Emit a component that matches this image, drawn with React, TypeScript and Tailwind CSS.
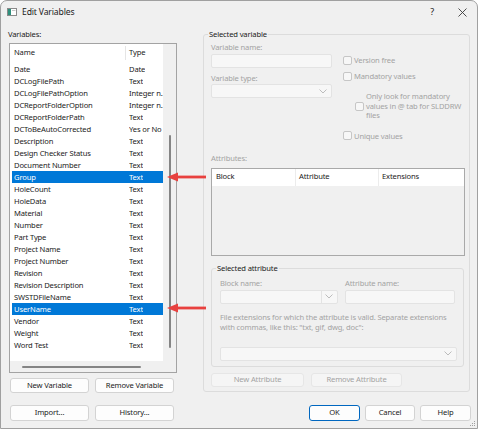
import React from 'react';

const rows: [string, string][] = [
  ['Date', 'Date'],
  ['DCLogFilePath', 'Text'],
  ['DCLogFilePathOption', 'Integer n.'],
  ['DCReportFolderOption', 'Integer n.'],
  ['DCReportFolderPath', 'Text'],
  ['DCToBeAutoCorrected', 'Yes or No'],
  ['Description', 'Text'],
  ['Design Checker Status', 'Text'],
  ['Document Number', 'Text'],
  ['Group', 'Text'],
  ['HoleCount', 'Text'],
  ['HoleData', 'Text'],
  ['Material', 'Text'],
  ['Number', 'Text'],
  ['Part Type', 'Text'],
  ['Project Name', 'Text'],
  ['Project Number', 'Text'],
  ['Revision', 'Text'],
  ['Revision Description', 'Text'],
  ['SWSTDFileName', 'Text'],
  ['UserName', 'Text'],
  ['Vendor', 'Text'],
  ['Weight', 'Text'],
  ['Word Test', 'Text'],
];

const selected = ['Group', 'UserName'];

const Chevron = () => (
  <svg width="8" height="5" viewBox="0 0 8 5" className="mr-[4px]">
    <path d="M0.5 0.5 L4 4 L7.5 0.5" fill="none" stroke="#b4b4b4" strokeWidth="0.9" />
  </svg>
);

const Checkbox = ({ label }: { label: React.ReactNode }) => (
  <div className="flex items-center h-[12px]">
    <div className="w-[9px] h-[9px] border border-[#c6c6c6] rounded-[2px] bg-[#f7f7f7] shrink-0" />
    <span className="ml-[2px] text-[#a3a3a3] leading-[12px]">{label}</span>
  </div>
);

const Button = ({ label, className, disabled }: { label: string; className: string; disabled?: boolean }) => (
  <div
    className={
      'flex items-center justify-center rounded-[3px] border ' +
      (disabled ? 'bg-[#f5f5f5] border-[#e6e6e6] text-[#a3a3a3] ' : 'bg-[#fdfdfd] border-[#d3d3d3] text-[#1b1b1b] ') +
      className
    }
  >
    {label}
  </div>
);

const Arrow = ({ top }: { top: string }) => (
  <svg width="40" height="10" viewBox="0 0 40 10" className={'absolute left-[167px] ' + top}>
    <polygon points="0,5 11,0.5 11,9.5" fill="#e8413f" />
    <rect x="10" y="3.6" width="29" height="2.8" fill="#e8413f" />
  </svg>
);

export default function App() {
  return (
    <div className="relative w-[480px] h-[430px] bg-white font-['Noto_Sans',sans-serif] text-[7.6px] tracking-[-0.15px] whitespace-nowrap text-[#1b1b1b]">
      <div className="relative w-[478px] h-[429px] border border-[#a0a0a0] rounded-t-[7px] bg-[#f0f0f0] flex flex-col overflow-hidden">
        {/* title bar */}
        <div className="h-[22px] flex items-center shrink-0">
          <svg width="10" height="8" viewBox="0 0 10 8" className="ml-[6px]">
            <rect x="0.5" y="0.5" width="9" height="7" fill="#ffffff" stroke="#8a8a8a" />
            <rect x="1" y="1" width="3" height="6" fill="#2f8f7c" />
            <rect x="5" y="2" width="3.5" height="1" fill="#c8c8c8" />
          </svg>
          <span className="ml-[5px] text-[8.6px] text-[#1b1b1b]">Edit Variables</span>
          <span className="ml-auto mr-[24px] text-[9px]">?</span>
          <svg width="9" height="9" viewBox="0 0 9 9" className="mr-[10px]">
            <path d="M0.5 0.5 L8.5 8.5 M8.5 0.5 L0.5 8.5" stroke="#3a3a3a" strokeWidth="0.9" />
          </svg>
        </div>

        {/* main */}
        <div className="flex pt-[5px] pl-[7px]">
          {/* left column */}
          <div className="w-[169px] flex flex-col">
            <div className="h-[12px] leading-[12px]">Variables:</div>
            <div className="mt-[3px] ml-[1px] w-[168px] h-[330px] border border-[#a3a3a3] flex flex-col">
              <div className="flex h-[317px]">
                <div className="w-[153px] bg-white overflow-hidden">
                  <div className="h-[18px] flex items-center">
                    <div className="w-[115px] pl-[4px]">Name</div>
                    <div className="h-[14px] w-px bg-[#e5e5e5]" />
                    <div className="pl-[3px]">Type</div>
                  </div>
                  <div className="mt-[1px]">
                    {rows.map(([n, t]) => {
                      const sel = selected.includes(n);
                      return (
                        <div
                          key={n}
                          className={
                            'ml-[2px] h-[12px] leading-[12px] flex ' +
                            (sel ? 'bg-[#0078d7] text-white' : '')
                          }
                        >
                          <div className="w-[117px] pl-[2px] shrink-0">{n}</div>
                          <div className="overflow-hidden">{t}</div>
                        </div>
                      );
                    })}
                  </div>
                </div>
                <div className="w-[13px] bg-[#f0f0f0]">
                  <div className="mt-[91px] ml-[6px] w-[2px] h-[213px] rounded-full bg-[#858585]" />
                </div>
              </div>
              <div className="h-[11px] bg-[#f0f0f0]">
                <div className="mt-[5px] ml-[12px] w-[119px] h-[2px] rounded-full bg-[#858585]" />
              </div>
            </div>
            <div className="mt-[5px] ml-[2px] flex gap-[6px]">
              <Button label="New Variable" className="w-[79px] h-[15px]" />
              <Button label="Remove Variable" className="w-[79px] h-[15px]" />
            </div>
          </div>

          {/* right column: Selected variable */}
          <div className="ml-[26px] mt-[6px] w-[267px] h-[358px] border border-[#dcdcdc] rounded-[3px] relative pl-[7px] pt-[6px]">
            <span className="absolute left-[4px] -top-[7px] px-[1px] bg-[#f0f0f0] leading-[12px] text-[#1b1b1b]">
              Selected variable
            </span>
            <div className="flex">
              <div className="w-[121px] flex flex-col text-[#a3a3a3]">
                <div className="h-[12px] leading-[12px]">Variable name:</div>
                <div className="mt-[1px] h-[14px] border border-[#e3e3e3] bg-[#f7f7f7] rounded-[2px]" />
                <div className="mt-[4px] h-[12px] leading-[12px]">Variable type:</div>
                <div className="h-[14px] border border-[#e3e3e3] bg-[#f7f7f7] rounded-[2px] flex items-center justify-end">
                  <Chevron />
                </div>
              </div>
              <div className="ml-[11px] flex flex-col">
                <div className="mt-[13px]">
                  <Checkbox label="Version free" />
                </div>
                <div className="mt-[4px]">
                  <Checkbox label="Mandatory values" />
                </div>
                <div className="mt-[10px] ml-[12px] flex items-center">
                  <div className="w-[9px] h-[9px] border border-[#c6c6c6] rounded-[2px] bg-[#f7f7f7] shrink-0" />
                  <div className="ml-[2px] text-[#a3a3a3] leading-[9.5px]">
                    Only look for mandatory
                    <br />
                    values in @ tab for SLDDRW
                    <br />
                    files
                  </div>
                </div>
                <div className="mt-[9px]">
                  <Checkbox label="Unique values" />
                </div>
              </div>
            </div>

            <div className="mt-[10px] h-[12px] leading-[12px] text-[#a3a3a3]">Attributes:</div>
            <div className="mt-[4px] w-[254px] h-[88px] border border-[#a9a9a9] bg-[#f0f0f0]">
              <div className="h-[17px] bg-white flex items-center">
                <div className="w-[84px] h-full flex items-center pl-[4px] border-r border-[#ececec]">Block</div>
                <div className="w-[83px] h-full flex items-center pl-[3px] border-r border-[#ececec]">Attribute</div>
                <div className="pl-[3px]">Extensions</div>
              </div>
            </div>

            {/* Selected attribute */}
            <div className="mt-[12px] w-[253px] h-[99px] border border-[#dcdcdc] rounded-[3px] relative pl-[8px] pt-[8px] text-[#a3a3a3]">
              <span className="absolute left-[4px] -top-[7px] px-[1px] bg-[#f0f0f0] leading-[12px] text-[#1b1b1b]">
                Selected attribute
              </span>
              <div className="flex">
                <div className="w-[118px]">
                  <div className="h-[12px] leading-[12px]">Block name:</div>
                  <div className="mt-[1px] h-[14px] border border-[#e3e3e3] bg-[#f7f7f7] rounded-[2px] flex items-center justify-end">
                    <div className="h-full w-px bg-[#e3e3e3] mr-[3px]" />
                    <Chevron />
                  </div>
                </div>
                <div className="ml-[7px] w-[110px]">
                  <div className="h-[12px] leading-[12px]">Attribute name:</div>
                  <div className="mt-[1px] h-[14px] border border-[#e3e3e3] bg-[#f7f7f7] rounded-[2px]" />
                </div>
              </div>
              <div className="mt-[8px] leading-[10px]">
                File extensions for which the attribute is valid. Separate extensions
                <br />
                with commas, like this: "txt, gif, dwg, doc":
              </div>
              <div className="mt-[15px] w-[237px] h-[14px] border border-[#e3e3e3] bg-[#f7f7f7] rounded-[2px] flex items-center justify-end">
                <Chevron />
              </div>
            </div>

            <div className="mt-[6px] flex gap-[7px]">
              <Button label="New Attribute" className="w-[93px] h-[14px]" disabled />
              <Button label="Remove Attribute" className="w-[91px] h-[14px]" disabled />
            </div>
          </div>
        </div>

        {/* footer */}
        <div className="mt-[12px] flex pl-[9px] pr-[6px]">
          <div className="flex gap-[6px]">
            <Button label="Import..." className="w-[79px] h-[16px]" />
            <Button label="History..." className="w-[79px] h-[16px]" />
          </div>
          <div className="ml-auto flex gap-[5px]">
            <div className="w-[51px] h-[16px] flex items-center justify-center rounded-[3px] border border-[#0067c0] bg-[#fdfdfd]">
              OK
            </div>
            <Button label="Cancel" className="w-[50px] h-[16px]" />
            <Button label="Help" className="w-[51px] h-[16px]" />
          </div>
        </div>

        <svg width="7" height="7" viewBox="0 0 7 7" className="absolute right-[1px] bottom-[1px]">
          <rect x="5" y="1" width="1" height="1" fill="#a0a0a0" />
          <rect x="3" y="3" width="1" height="1" fill="#a0a0a0" />
          <rect x="5" y="3" width="1" height="1" fill="#a0a0a0" />
          <rect x="1" y="5" width="1" height="1" fill="#a0a0a0" />
          <rect x="3" y="5" width="1" height="1" fill="#a0a0a0" />
          <rect x="5" y="5" width="1" height="1" fill="#a0a0a0" />
        </svg>
      </div>

      <Arrow top="top-[172px]" />
      <Arrow top="top-[303px]" />
    </div>
  );
}
